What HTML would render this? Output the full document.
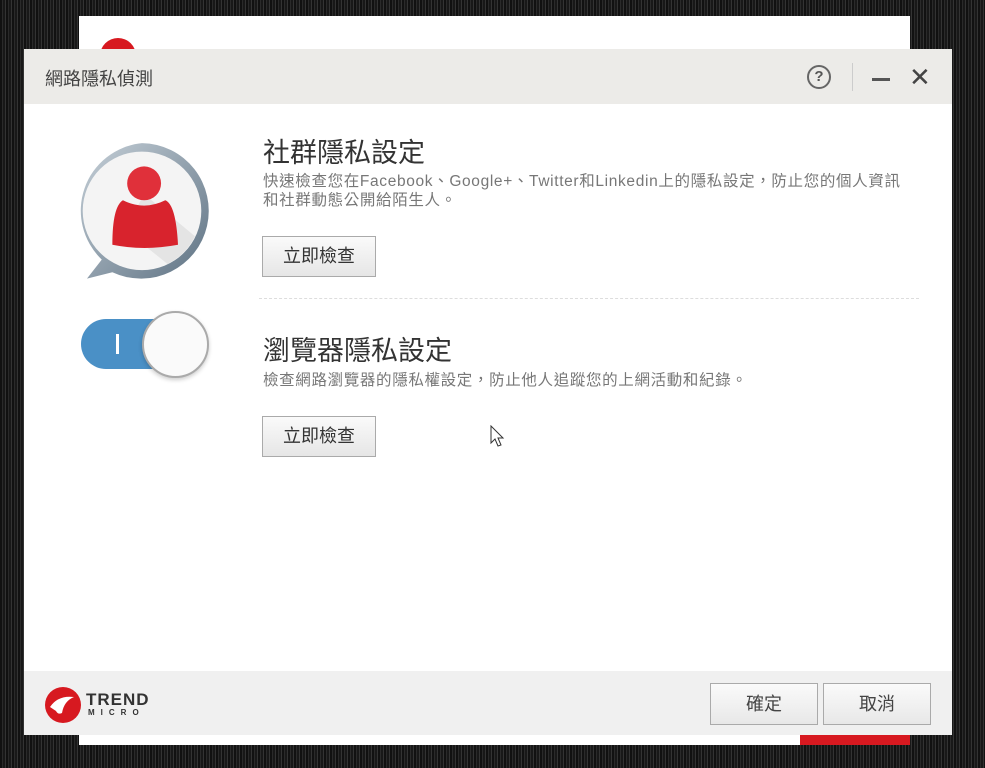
<!DOCTYPE html>
<html><head><meta charset="utf-8"><style>
*{margin:0;padding:0;box-sizing:border-box}
body{width:985px;height:768px;overflow:hidden;background:repeating-linear-gradient(90deg,#111 0 2px,#2a2a2a 2px 3px,#181818 3px 5px,#333 5px 6px);font-family:"Liberation Sans","Noto Sans CJK TC",sans-serif;position:relative}
.back{position:absolute;left:79px;top:16px;width:831px;height:729px;background:#fff}
.backred{position:absolute;left:800px;top:730px;width:110px;height:15px;background:#d71920}
.backlogo{position:absolute;left:100px;top:38px;width:36px;height:20px;border-radius:18px 18px 0 0;background:#d71920}
.dlg{position:absolute;left:24px;top:49px;width:928px;height:686px;background:#fff}
.tb{height:55px;background:#ecebe8;position:relative}
.tb .t{position:absolute;left:21px;top:16px;font-size:18px;color:#444}
.help{position:absolute;left:783px;top:16px;width:24px;height:24px;border:2px solid #666;border-radius:50%;font-size:15px;text-align:center;line-height:20px;color:#555;font-weight:bold}
.sep{position:absolute;left:828px;top:14px;width:1px;height:28px;background:#ccc}
.min{position:absolute;left:848px;top:29px;width:18px;height:3px;background:#555}
.x{position:absolute;left:885px;top:13px;font-size:26px;color:#444}
h2{position:absolute;left:239px;font-size:27px;font-weight:normal;color:#333;white-space:nowrap}
.d{position:absolute;left:239px;font-size:15.5px;color:#777;line-height:19px;white-space:nowrap;letter-spacing:0.65px}
.btn{position:absolute;left:238px;width:114px;height:41px;border:1px solid #aaa;background:linear-gradient(#fafafa,#e6e6e6);font-size:18px;color:#333;text-align:center;line-height:39px}
.dash{position:absolute;left:235px;top:249px;width:660px;border-top:1px dashed #ddd}
.ft{position:absolute;left:0;top:622px;width:928px;height:64px;background:#f0f0f0}
.fb{position:absolute;top:12px;width:108px;height:42px;border:1px solid #aaa;background:linear-gradient(#fafafa,#e8e8e8);font-size:18px;color:#444;text-align:center;line-height:40px}
</style></head><body>
<div class="back"></div><div class="backlogo"></div><div class="backred"></div>
<div class="dlg">
 <div class="tb"><div class="t">網路隱私偵測</div><div class="help">?</div><div class="sep"></div><div class="min"></div><div class="x">✕</div></div>
 <svg style="position:absolute;left:46px;top:92px" width="144" height="144" viewBox="0 0 136 136">
  <defs><linearGradient id="g" x1="0" y1="0" x2="1" y2="1"><stop offset="0" stop-color="#c6d0d8"/><stop offset="1" stop-color="#5e7283"/></linearGradient></defs>
  <path d="M68 2A64 64 0 1 1 40 124L16 130L30 112A64 64 0 0 1 68 2Z" fill="url(#g)"/>
  <circle cx="68" cy="66" r="56" fill="#f4f4f4"/>
  <path d="M70 50L118 90A56 56 0 0 1 92 116L52 84Z" fill="#e4e4e4"/>
  <circle cx="70" cy="40" r="16" fill="#e0303a"/>
  <path d="M50 56Q70 66 90 56Q100 60 102 98Q70 104 40 98Q40 62 50 56Z" fill="#d8232d"/>
 </svg>
 <div style="position:absolute;left:57px;top:270px;width:104px;height:50px;border-radius:25px;background:#4a90c6"></div>
 <div style="position:absolute;left:92px;top:285px;width:3px;height:20px;background:#fff"></div>
 <div style="position:absolute;left:118px;top:262px;width:67px;height:67px;border-radius:50%;background:#fafafa;border:2px solid #aaa;box-shadow:0 2px 4px rgba(0,0,0,.2)"></div>
 <h2 style="top:82px">社群隱私設定</h2>
 <div class="d" style="top:123px">快速檢查您在Facebook、Google+、Twitter和Linkedin上的隱私設定，防止您的個人資訊<br>和社群動態公開給陌生人。</div>
 <div class="btn" style="top:187px">立即檢查</div>
 <div class="dash"></div>
 <h2 style="top:280px">瀏覽器隱私設定</h2>
 <div class="d" style="top:322px">檢查網路瀏覽器的隱私權設定，防止他人追蹤您的上網活動和紀錄。</div>
 <div class="btn" style="top:367px">立即檢查</div>
 <svg style="position:absolute;left:466px;top:376px" width="16" height="24" viewBox="0 0 16 24"><path d="M1 1L1 18L5 14L8 21L11 20L8 13L13 13Z" fill="#fff" stroke="#333"/></svg>
 <div class="ft">
  <svg style="position:absolute;left:20px;top:14px" width="40" height="40" viewBox="0 0 40 40"><circle cx="19" cy="20" r="18" fill="#d71920"/><path d="M6 22Q14 10 30 12Q20 16 18 28Q14 30 12 26Z" fill="#fff"/></svg>
  <div style="position:absolute;left:62px;top:19px;font-size:17px;font-weight:bold;color:#333;letter-spacing:1px">TREND</div>
  <div style="position:absolute;left:64px;top:37px;font-size:8px;font-weight:bold;color:#333;letter-spacing:6px">MICRO</div>
  <div class="fb" style="left:686px">確定</div>
  <div class="fb" style="left:799px">取消</div>
 </div>
</div>
</body></html>
